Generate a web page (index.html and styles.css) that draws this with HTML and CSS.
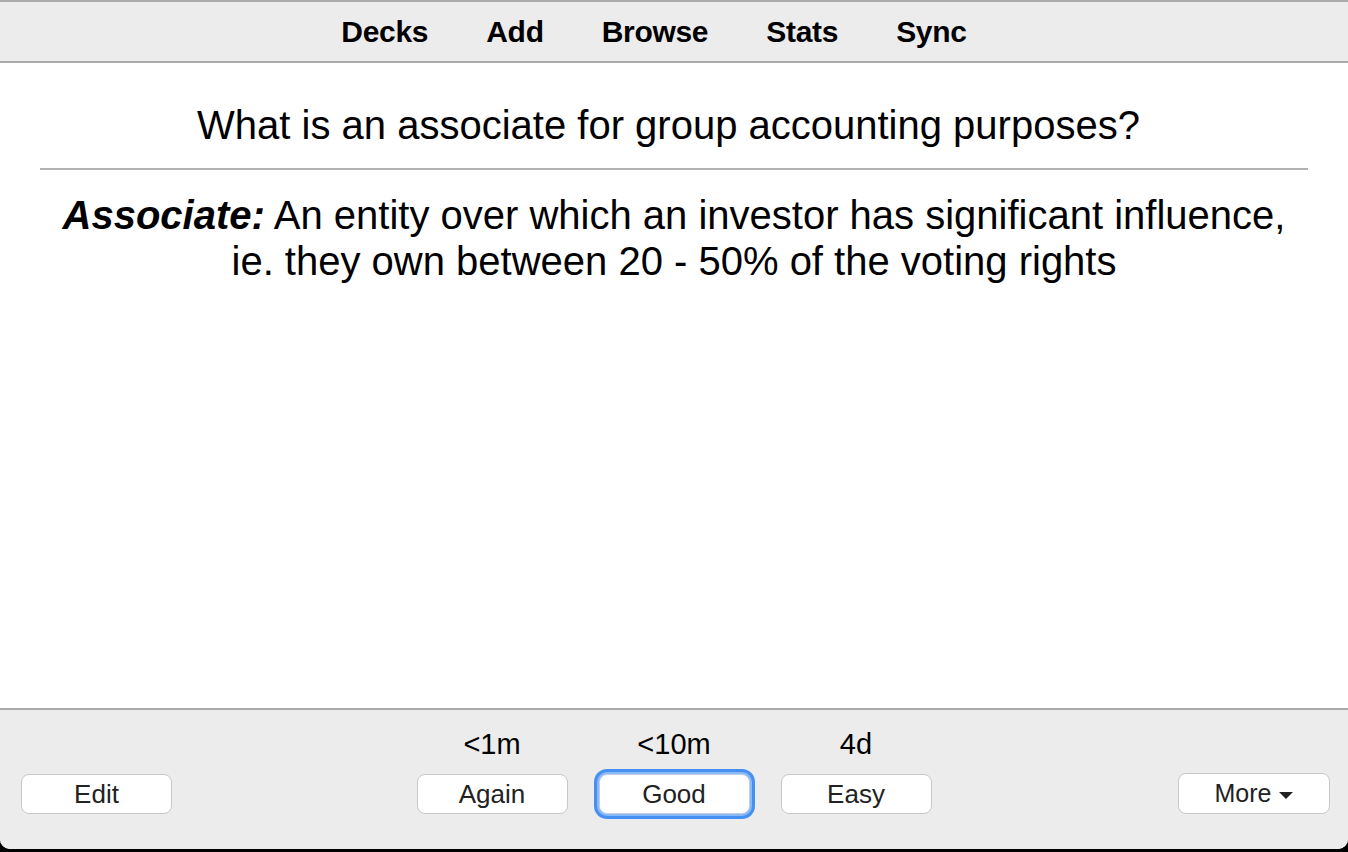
FILE: index.html
```html
<!DOCTYPE html>
<html>
<head>
<meta charset="utf-8">
<link rel="stylesheet" href="styles.css">
</head>
<body>
<div class="window">
  <header class="toolbar">
    <nav class="nav">
      <span class="nav-item">Decks</span>
      <span class="nav-item">Add</span>
      <span class="nav-item">Browse</span>
      <span class="nav-item">Stats</span>
      <span class="nav-item">Sync</span>
    </nav>
  </header>
  <main class="card">
    <div class="question">What is an associate for group accounting purposes?</div>
    <hr class="divider">
    <div class="answer"><b class="term">Associate:</b> An entity over which an investor has significant influence, ie. they own between 20 - 50% of the voting rights</div>
  </main>
  <footer class="bottombar">
    <div class="side left"><button class="btn">Edit</button></div>
    <div class="answers">
      <div class="ans-col"><div class="due">&lt;1m</div><button class="btn">Again</button></div>
      <div class="ans-col"><div class="due">&lt;10m</div><button class="btn focus">Good</button></div>
      <div class="ans-col"><div class="due">4d</div><button class="btn">Easy</button></div>
    </div>
    <div class="side right"><button class="btn more">More <span class="caret"></span></button></div>
  </footer>
</div>
</body>
</html>
```
FILE: styles.css
```css
html, body {
  margin: 0;
  padding: 0;
  background: #000;
}
body {
  width: 1348px;
  height: 852px;
  overflow: hidden;
  font-family: "Liberation Sans", Arial, Helvetica, sans-serif;
}
.window {
  height: 849px;
  display: flex;
  flex-direction: column;
  background: #fff;
  border-radius: 0 0 10px 10px;
  overflow: hidden;
}
.toolbar {
  height: 59px;
  background: #ececec;
  border-top: 2px solid #aaaaaa;
  border-bottom: 2px solid #aaaaaa;
  display: flex;
  align-items: center;
  justify-content: center;
}
.nav {
  display: flex;
  gap: 58px;
  padding-right: 40px;
}
.nav-item {
  font-size: 30px;
  font-weight: bold;
  color: #000;
  line-height: 34px;
  letter-spacing: -0.3px;
}
.card {
  flex: 1;
  background: #fff;
  padding: 39px 40px 0 40px;
  text-align: center;
  color: #000;
  font-size: 40px;
  line-height: 46px;
}
.question {
  margin: 0;
  padding-right: 11px;
}
.divider {
  border: 0;
  border-top: 2px solid #b2b2b2;
  margin: 20px 0 22px 0;
  height: 0;
}
.term {
  font-weight: bold;
  font-style: italic;
}
.bottombar {
  height: 104px;
  background: #ececec;
  border-top: 2px solid #aaaaaa;
  padding-bottom: 35px;
  display: grid;
  grid-template-columns: 1fr auto 1fr;
  align-items: end;
}
.side.left {
  justify-self: start;
  padding-left: 21px;
}
.side.right {
  justify-self: end;
  padding-right: 18px;
}
.answers {
  display: grid;
  grid-template-columns: repeat(3, 182px);
}
.ans-col {
  display: flex;
  flex-direction: column;
  align-items: center;
}
.due {
  font-size: 29px;
  line-height: 34px;
  color: #000;
  margin-bottom: 13px;
}
.btn {
  width: 151px;
  height: 40px;
  background: #fff;
  border: 1.5px solid #c8c8c8;
  border-radius: 8px;
  font-family: "Liberation Sans", Arial, Helvetica, sans-serif;
  font-size: 26px;
  color: #222;
  padding: 0;
  display: flex;
  align-items: center;
  justify-content: center;
  gap: 8px;
}
.btn.focus {
  border-color: #bfcfe6;
  box-shadow: 0 0 0 2px #8ab8f5, 0 0 0 5px #4790f3;
}
.btn.more {
  width: 152px;
  height: 41px;
  font-size: 25px;
}
.caret {
  display: inline-block;
  width: 0;
  height: 0;
  border-left: 7px solid transparent;
  border-right: 7px solid transparent;
  border-top: 7px solid #222;
  margin-top: 3px;
}
```
